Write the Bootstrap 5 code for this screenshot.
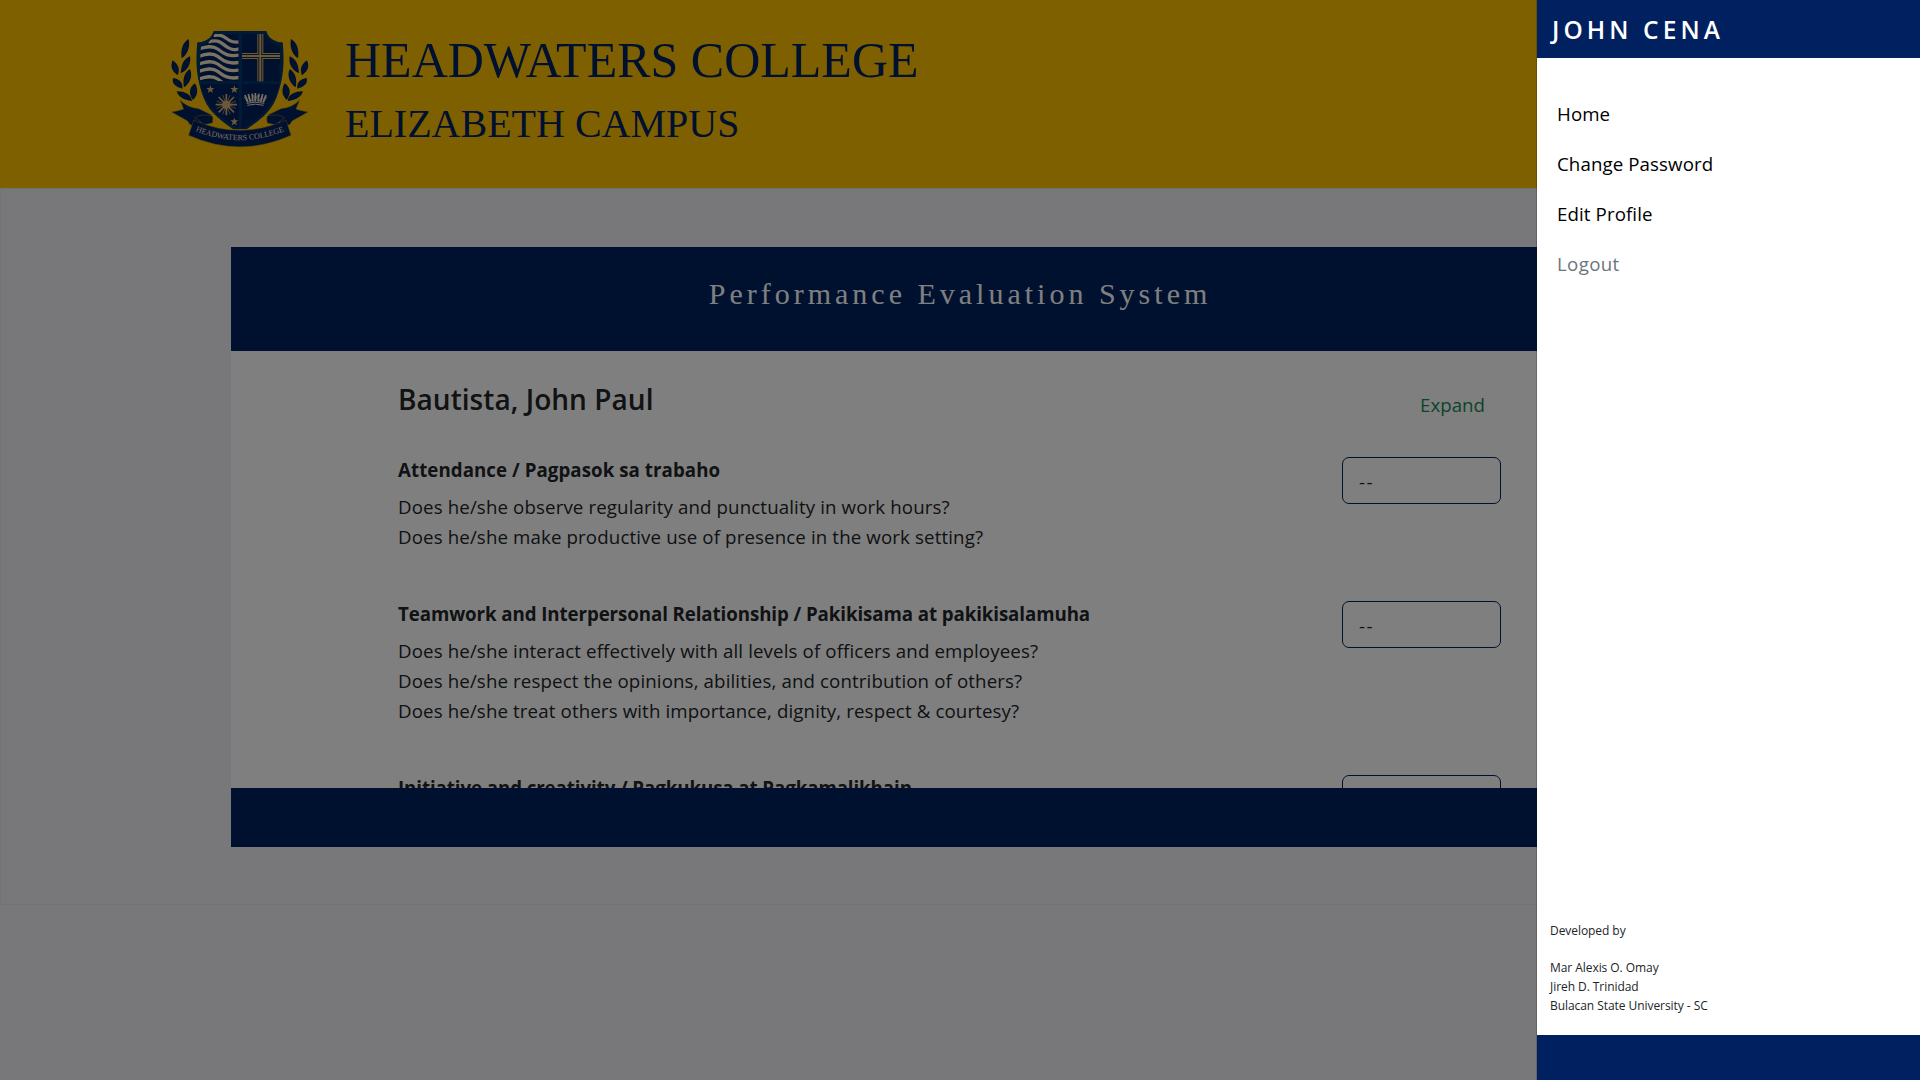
<!DOCTYPE html>
<html lang="en">
<head>
<meta charset="utf-8">
<meta name="viewport" content="width=device-width, initial-scale=1">
<title>Performance Evaluation System</title>
<link rel="stylesheet" href="https://cdn.jsdelivr.net/npm/bootstrap@5.3.0/dist/css/bootstrap.min.css">
<style>
:root { --navy: #00205f; --gold: #ffc000; }
body { font-family: "Open Sans", "Noto Sans", sans-serif; font-size: 18.7px; background: #f1f1f4; overflow: hidden; height: 1080px; }
.serif { font-family: "Liberation Serif", serif; }
.site-header { height: 188px; background: var(--gold); color: var(--navy); padding: 20px 0 0 160px; }
.site-logo { width: 160px; height: 136px; flex: none; }
.site-title { padding: 10px 0 0 25px; white-space: nowrap; }
.site-name { font-size: 50px; line-height: 60px; }
.site-campus { font-size: 40px; line-height: 48px; margin-top: 10px; }
.site-main { height: 717px; padding: 58px 230px 57px; border: 1px solid #e6e6e9; }
.panel-head { height: 104px; background: var(--navy); color: #fff; font-size: 30px; letter-spacing: 4px; line-height: 36px; padding-top: 29px; }
.panel-body { height: 437px; background: #fff; padding: 30px 188px 0 167px; overflow: hidden; }
.panel-foot { height: 59px; background: var(--navy); }
.person { height: 76px; }
.person-name { font-size: 28px; font-weight: 600; line-height: 36px; letter-spacing: .05px; }
.expand { color: #198754; line-height: 30px; padding: 9px 16px 0 0; }
.criterion { margin-bottom: 49px; }
.criterion-title { font-weight: 700; line-height: 26px; margin-bottom: 9px; white-space: nowrap; letter-spacing: -.08px; }
.person + .criterion .criterion-title { letter-spacing: .06px; }
.criterion-line { line-height: 30px; white-space: nowrap; letter-spacing: .125px; }
.rating { width: 159px; height: 47px; border: 1px solid var(--navy); border-radius: 7px; padding: 8px 16px; line-height: 32px; letter-spacing: 1.5px; background: #fff; }
.side-menu.offcanvas { width: 384px; font-weight: 400; }
.side-head { height: 58px; background: var(--navy); color: #fff; font-size: 24.5px; font-weight: 600; letter-spacing: 4.1px; line-height: 59px; padding-left: 15px; }
.side-nav { padding: 31px 0 0 20px; }
.side-nav a { color: #000; line-height: 50px; text-decoration: none; letter-spacing: .1px; }
.side-nav a.leave { color: #6c757d; letter-spacing: .35px; }
.credits { font-size: 12px; line-height: 19px; padding: 0 0 20px 13px; color: #212529; letter-spacing: -.06px; }
.credits-label { margin-bottom: 18px; }
.side-foot { height: 45px; background: var(--navy); }
</style>
<script src="https://cdn.jsdelivr.net/npm/bootstrap@5.3.0/dist/js/bootstrap.bundle.min.js"></script>
</head>
<body>
<header class="site-header d-flex align-items-start">
  <svg class="site-logo" viewBox="0 0 480 408" aria-label="Headwaters College crest">
    <defs>
      <path id="star" d="M0-12L3-4L12-4L5 2L8 11L0 6L-8 11L-5 2L-12-4L-3-4Z"/>
      <path id="motto" d="M103 332Q240 389 376 332"/>
      <clipPath id="waves"><path d="M164 42H236V184H120Q119 124 123 78Q151 70 164 42Z"/></clipPath>
      <g id="laurel" fill="#00205f">
        <path d="M65 115C61 89 68 67 86 57C91 80 83 103 65 115Z"/>
        <path d="M62 160C64 134 69 119 90 109C94 132 83 151 62 160Z"/>
        <path d="M72 202C67 176 73 158 90 147C99 168 90 190 72 202Z"/>
        <path d="M99 240C84 220 88 201 105 190C116 209 113 227 99 240Z"/>
        <path d="M53 166C35 153 30 139 38 121C55 133 61 149 53 166Z"/>
        <path d="M67 206C45 200 35 190 39 174C59 177 70 188 67 206Z"/>
        <path d="M96 243C70 240 55 231 50 214C76 214 94 224 96 243Z"/>
      </g>
    </defs>
    <use href="#laurel"/>
    <use href="#laurel" transform="translate(479 0) scale(-1 1)"/>
    <path d="M161 33H319C325 54 344 67 368 67C374 126 371 178 348 236C329 282 292 304 260 328H220C188 304 151 282 132 236C109 178 106 126 112 67C136 67 155 54 161 33Z" fill="#00376a"/>
    <path d="M164 42H236V184H120Q119 124 123 78Q151 70 164 42Z" fill="#00205f"/>
    <path d="M246 42H315Q328 70 359 77Q363 131 358 184H246Z" fill="#00205f"/>
    <path d="M122 192H236V326Q181 298 153 260Q130 231 122 192Z" fill="#00205f"/>
    <path d="M246 192H358Q349 231 326 260Q299 298 246 326Z" fill="#00205f"/>
    <g clip-path="url(#waves)" fill="none" stroke="#f5e6c8" stroke-width="10">
      <path d="M160 47C185 40 196 54 208 61S225 66 240 66"/>
      <path d="M145 66C177 55 185 72 203 82S225 89 240 86"/>
      <path d="M116 87C137 80 157 75 173 87S203 112 240 105"/>
      <path d="M116 109C137 102 157 97 173 109S203 134 240 127"/>
      <path d="M116 132C137 125 157 120 173 132S203 157 240 150"/>
      <path d="M116 154C137 147 157 142 173 154S203 179 240 172"/>
      <path d="M116 177C137 170 157 165 173 177S203 202 240 195"/>
    </g>
    <g fill="none">
      <path d="M301 42V184M246 108H360" stroke="#d9b468" stroke-width="18"/>
      <path d="M301 42V184M246 108H360" stroke="#17274d" stroke-width="12"/>
      <path d="M301 42V184M246 108H360" stroke="#d9b468" stroke-width="6"/>
    </g>
    <g fill="#d9b070">
      <use href="#star" x="151" y="208"/>
      <use href="#star" x="223" y="208"/>
      <use href="#star" x="223" y="305"/>
      <circle cx="199" cy="254" r="12"/>
    </g>
    <g stroke="#d9b070" stroke-width="5" fill="none">
      <path d="M199 222V286M167 254H231M176 231L222 277M222 231L176 277"/>
      <path d="M188 225L210 283M210 225L188 283M170 243L228 265M228 243L170 265" stroke-width="2"/>
    </g>
    <g fill="none" stroke="#f0dfc8">
      <path d="M260 250Q286 243 313 250M262 256Q286 249 311 256" stroke-width="3"/>
      <path d="M255 225L264 247M265 222L271 246M276 221L279 245M286 219V245M297 221L294 245M308 222L302 246M318 225L309 247" stroke-width="5"/>
      <path d="M252 230L261 245L267 228L273 244L281 226L286 243L292 226L299 244L306 228L312 245L321 230" stroke-width="2"/>
    </g>
    <g fill="#00205f" stroke="#a08020" stroke-width="1.5">
      <path d="M60 240Q81 263 116 266L155 285L101 318L89 313L83 303L35 276Q61 271 71 267Z"/>
      <path d="M419 240Q398 263 363 266L324 285L378 318L390 313L396 303L444 276Q418 271 408 267Z"/>
      <path d="M104 294Q119 281 156 287Q161 294 157 309L126 316Q125 302 104 294Z"/>
      <path d="M375 294Q360 281 323 287Q318 294 322 309L353 316Q354 302 375 294Z"/>
      <path d="M101 300Q239 362 378 300L393 346Q239 415 86 346Z"/>
    </g>
    <text font-family="Liberation Serif, serif" font-size="24" fill="#f0dfc8" text-anchor="middle"><textPath href="#motto" startOffset="50%" textLength="274">HEADWATERS COLLEGE</textPath></text>
  </svg>
  <div class="site-title serif">
    <div class="site-name">HEADWATERS COLLEGE</div>
    <div class="site-campus">ELIZABETH CAMPUS</div>
  </div>
</header>
<main class="site-main">
  <section>
    <div class="panel-head serif text-center">Performance Evaluation System</div>
    <div class="panel-body">
      <div class="person d-flex justify-content-between align-items-start">
        <div class="person-name">Bautista, John Paul</div>
        <div class="expand">Expand</div>
      </div>
      <div class="criterion d-flex justify-content-between align-items-start">
        <div>
          <div class="criterion-title">Attendance / Pagpasok sa trabaho</div>
          <div class="criterion-line">Does he/she observe regularity and punctuality in work hours?</div>
          <div class="criterion-line">Does he/she make productive use of presence in the work setting?</div>
        </div>
        <div class="rating">--</div>
      </div>
      <div class="criterion d-flex justify-content-between align-items-start">
        <div>
          <div class="criterion-title">Teamwork and Interpersonal Relationship / Pakikisama at pakikisalamuha</div>
          <div class="criterion-line">Does he/she interact effectively with all levels of officers and employees?</div>
          <div class="criterion-line">Does he/she respect the opinions, abilities, and contribution of others?</div>
          <div class="criterion-line">Does he/she treat others with importance, dignity, respect &amp; courtesy?</div>
        </div>
        <div class="rating">--</div>
      </div>
      <div class="criterion d-flex justify-content-between align-items-start">
        <div class="criterion-title">Initiative and creativity / Pagkukusa at Pagkamalikhain</div>
        <div class="rating">--</div>
      </div>
    </div>
    <div class="panel-foot"></div>
  </section>
</main>
<div class="offcanvas-backdrop fade show"></div>
<aside class="offcanvas offcanvas-end show side-menu" tabindex="-1" data-bs-backdrop="false" data-bs-scroll="true">
  <div class="side-head">JOHN CENA</div>
  <nav class="side-nav d-flex flex-column flex-grow-1">
    <a href="#">Home</a>
    <a href="#">Change Password</a>
    <a href="#">Edit Profile</a>
    <a href="#" class="leave">Logout</a>
  </nav>
  <div class="credits">
    <div class="credits-label">Developed by</div>
    <div>Mar Alexis O. Omay</div>
    <div>Jireh D. Trinidad</div>
    <div>Bulacan State University - SC</div>
  </div>
  <div class="side-foot"></div>
</aside>
</body>
</html>
